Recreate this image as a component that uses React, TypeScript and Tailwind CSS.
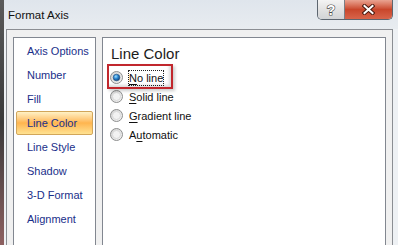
const menu = ["Axis Options", "Number", "Fill", "Line Color", "Line Style", "Shadow", "3-D Format", "Alignment"];

type Opt = { pre: string; key: string; post: string; checked?: boolean };

const options: Opt[] = [
  { pre: "", key: "N", post: "o line", checked: true },
  { pre: "", key: "S", post: "olid line" },
  { pre: "", key: "G", post: "radient line" },
  { pre: "A", key: "u", post: "tomatic" },
];

function Radio({ checked, id }: { checked?: boolean; id: string }) {
  return (
    <svg width="13" height="13" viewBox="0 0 13 13" className="shrink-0">
      <defs>
        <linearGradient id={`ring-${id}`} x1="0" y1="0" x2="1" y2="1">
          <stop offset="0" stopColor="#cfcfcf" />
          <stop offset="1" stopColor="#f7f7f7" />
        </linearGradient>
        <radialGradient id={`dot-${id}`} cx="0.4" cy="0.35" r="0.7">
          <stop offset="0" stopColor="#9ee0ff" />
          <stop offset="0.45" stopColor="#2f8ad4" />
          <stop offset="1" stopColor="#0b3b70" />
        </radialGradient>
      </defs>
      <circle cx="6.5" cy="6.5" r="6" fill={`url(#ring-${id})`} stroke="#8e8f8f" strokeWidth="1" />
      <circle cx="6.5" cy="6.5" r="4" fill="#f2f2f2" stroke="#d4d4d4" strokeWidth="0.8" />
      {checked && <circle cx="6.5" cy="6.5" r="3.3" fill={`url(#dot-${id})`} stroke="#1c4a7c" strokeWidth="0.6" />}
    </svg>
  );
}

export default function App() {
  return (
    <div className="w-[398px] h-[245px] overflow-hidden flex bg-[#eef1f4] font-['Liberation_Sans',Arial,sans-serif]">
      <div className="w-[4px] shrink-0 bg-gradient-to-b from-[#5a5a5a] via-[#3a3a3a] to-[#8d6060]" />
      <div className="flex-1 flex flex-col">
        <div className="h-[29px] shrink-0 flex items-start justify-between bg-gradient-to-b from-[#dfe5ec] to-[#e8ecf0]">
          <span className="pl-[4px] pt-[8px] text-[11.5px] leading-[14px] text-[#111]">Format Axis</span>
          <div className="flex mr-[5px] h-[20px] rounded-b-[5px] border border-t-0 border-[#5d6670] overflow-hidden">
            <div className="w-[27px] flex items-center justify-center bg-gradient-to-b from-[#f4f4f4] via-[#e2e2e2] to-[#d2d4d6] border-r border-[#7a7f86]">
              <span className="text-[14px] font-bold leading-none text-white [-webkit-text-stroke:1.2px_#4a4a4a] [paint-order:stroke_fill]">?</span>
            </div>
            <div className="w-[47px] flex items-center justify-center bg-gradient-to-b from-[#e9a391] via-[#c9462b] to-[#d8644a]">
              <svg width="13" height="11" viewBox="0 0 13 11">
                <path d="M2.5 2 L10.5 9 M10.5 2 L2.5 9" stroke="#4a1a10" strokeWidth="4" strokeLinecap="square" />
                <path d="M2.5 2 L10.5 9 M10.5 2 L2.5 9" stroke="#ffffff" strokeWidth="2" strokeLinecap="square" />
              </svg>
            </div>
          </div>
        </div>
        <div className="flex-1 ml-[2px] mr-[5px] border border-b-0 border-[#8b8e93] bg-[#f0f0f0] flex gap-[6px] pl-[6px] pr-[6px] pt-[7px]">
          <div className="w-[83px] shrink-0 border border-b-0 border-[#828790] bg-white pt-[1px] text-[11px] text-[#1a2f8a]">
            {menu.map((m) =>
              m === "Line Color" ? (
                <div
                  key={m}
                  className="h-[24px] mx-[2px] flex items-center pl-[10px] rounded-[2px] border border-[#d2a65a] bg-gradient-to-b from-[#fff1c4] via-[#ffb54e] to-[#ffe291]"
                >
                  {m}
                </div>
              ) : (
                <div key={m} className="h-[24px] mx-[2px] flex items-center pl-[11px]">
                  {m}
                </div>
              )
            )}
          </div>
          <div className="flex-1 relative border border-b-0 border-[#828790] bg-white pt-[7px]">
            <div className="pl-[8px] text-[15px] leading-[18px] text-[#1c1c1c]">Line Color</div>
            <div className="mt-[5px] flex flex-col text-[11px] text-[#111]">
              {options.map((o, i) => (
                <div key={i} className="h-[19px] flex items-center gap-[6px] pl-[7px]">
                  <Radio checked={o.checked} id={`r${i}`} />
                  <span className={o.checked ? "leading-[14px] outline outline-1 outline-dotted outline-[#222]" : "leading-[14px]"}>
                    {o.pre}
                    <span className="underline underline-offset-[2px]">{o.key}</span>
                    {o.post}
                  </span>
                </div>
              ))}
            </div>
            <div className="absolute left-[4px] top-[26px] w-[66px] h-[25px] border-2 border-[#c1272d] shadow-[inset_-2px_-2px_3px_rgba(0,0,0,0.15),2px_2px_3px_rgba(0,0,0,0.2)]" />
          </div>
        </div>
      </div>
    </div>
  );
}
